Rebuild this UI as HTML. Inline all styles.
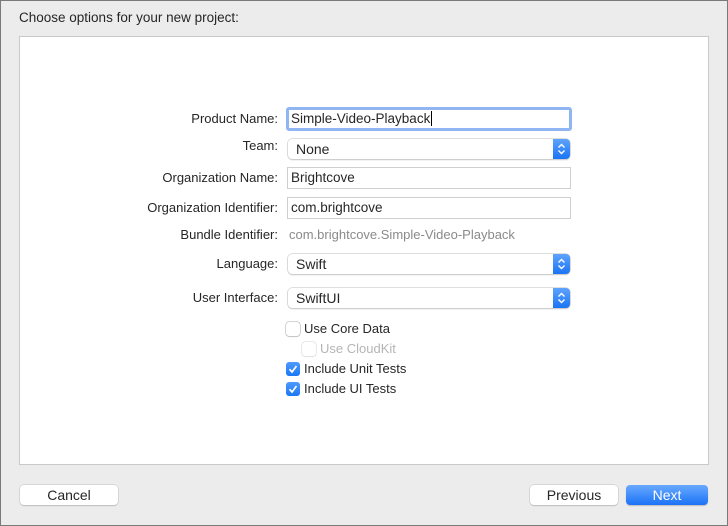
<!DOCTYPE html><html><head><style>
*{box-sizing:border-box;margin:0;padding:0}
body{width:728px;height:526px;background:#ececec;font-family:"Liberation Sans",sans-serif;font-size:13px;color:#262626;position:relative;overflow:hidden}
.frame{left:0;top:0;width:728px;height:526px;border:1px solid #7a7a7a}
.a{position:absolute}
.panel{left:19px;top:36px;width:690px;height:429px;background:#fff;border:1px solid #c9c9c9}
.lbl{right:450px;text-align:right;white-space:nowrap}
.in{background:#fff;border:1px solid #cfcfcf;padding:0 0 0 3px;line-height:20px;font-size:13.5px}
.pop{background:#fff;border-radius:4px;box-shadow:0 0 0 .5px #bdbdbd,0 1px 1.5px rgba(0,0,0,.2);padding-left:8px;line-height:20px;font-size:14px}
.st{position:absolute;right:0;top:0;width:17px;height:20px;background:linear-gradient(#5ea3ff,#1a74f4);border-radius:0 4px 4px 0}
.cb{width:14px;height:14px;border-radius:3px;background:#fff;box-shadow:0 0 0 .5px #a8a8a8,0 1px 1px rgba(0,0,0,.15)}
.cb.on{background:linear-gradient(#4e9bff,#1b76f5);box-shadow:none}
.btn{background:#fff;border-radius:4px;box-shadow:0 0 0 .5px #c0c0c0,0 1px 1px rgba(0,0,0,.2);text-align:center;line-height:20px;font-size:14px}
</style></head><body>
<div class="a frame"></div>
<div class="a" style="left:19px;top:10px;font-size:13.5px">Choose options for your new project:</div>
<div class="a panel"></div>
<div class="a lbl" style="top:111px">Product Name:</div>
<div class="a lbl" style="top:138px">Team:</div>
<div class="a lbl" style="top:170px">Organization Name:</div>
<div class="a lbl" style="top:200px">Organization Identifier:</div>
<div class="a lbl" style="top:227px">Bundle Identifier:</div>
<div class="a lbl" style="top:256px">Language:</div>
<div class="a lbl" style="top:290px">User Interface:</div>
<div class="a in" style="left:286px;top:107px;width:286px;height:24px;border:3px solid #8fb5f2;border-radius:3px;line-height:18px;padding-left:2px">Simple-Video-Playback<span style="border-left:1px solid #000;margin-left:1px"></span></div>
<div class="a pop" style="left:288px;top:139px;width:282px;height:20px">None<div class="st"><svg width="17" height="20"><path d="M5.5 8.5l3-3 3 3M5.5 11.5l3 3 3-3" stroke="#fff" stroke-width="1.4" fill="none"/></svg></div></div>
<div class="a in" style="left:287px;top:167px;width:284px;height:22px">Brightcove</div>
<div class="a in" style="left:287px;top:197px;width:284px;height:22px">com.brightcove</div>
<div class="a" style="left:289px;top:227px;color:#8a8a8a">com.brightcove.Simple-Video-Playback</div>
<div class="a pop" style="left:288px;top:254px;width:282px;height:20px">Swift<div class="st"><svg width="17" height="20"><path d="M5.5 8.5l3-3 3 3M5.5 11.5l3 3 3-3" stroke="#fff" stroke-width="1.4" fill="none"/></svg></div></div>
<div class="a pop" style="left:288px;top:288px;width:282px;height:20px">SwiftUI<div class="st"><svg width="17" height="20"><path d="M5.5 8.5l3-3 3 3M5.5 11.5l3 3 3-3" stroke="#fff" stroke-width="1.4" fill="none"/></svg></div></div>
<div class="a cb" style="left:286px;top:322px"></div><div class="a" style="left:304px;top:321px">Use Core Data</div>
<div class="a cb" style="left:302px;top:342px;opacity:.5"></div><div class="a" style="left:320px;top:341px;color:#b5b5b5">Use CloudKit</div>
<div class="a cb on" style="left:286px;top:362px"><svg width="14" height="14"><path d="M3.5 7.2l2.5 2.8 4.5-6" stroke="#fff" stroke-width="1.7" fill="none"/></svg></div><div class="a" style="left:304px;top:361px">Include Unit Tests</div>
<div class="a cb on" style="left:286px;top:382px"><svg width="14" height="14"><path d="M3.5 7.2l2.5 2.8 4.5-6" stroke="#fff" stroke-width="1.7" fill="none"/></svg></div><div class="a" style="left:304px;top:381px">Include UI Tests</div>
<div class="a btn" style="left:20px;top:485px;width:98px;height:20px">Cancel</div>
<div class="a btn" style="left:530px;top:485px;width:88px;height:20px">Previous</div>
<div class="a btn" style="left:626px;top:485px;width:82px;height:20px;background:linear-gradient(#69a9ff,#1b73f6);color:#fff;box-shadow:0 1px 1px rgba(0,0,0,.2)">Next</div>
</body></html>
